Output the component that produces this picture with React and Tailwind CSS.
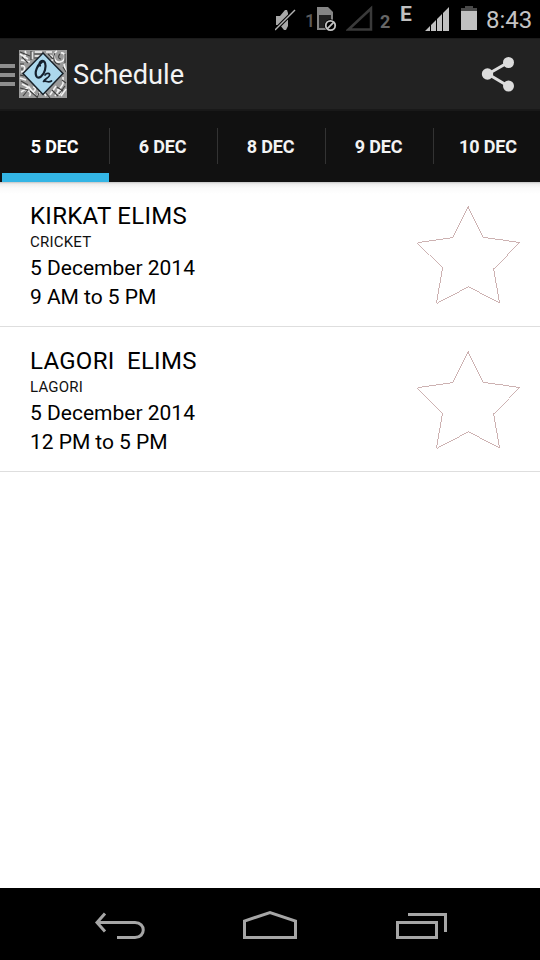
const TABS = ["5 DEC", "6 DEC", "8 DEC", "9 DEC", "10 DEC"];

const EVENTS = [
  { title: "KIRKAT ELIMS", sport: "CRICKET", date: "5 December 2014", time: "9 AM to 5 PM" },
  { title: "LAGORI  ELIMS", sport: "LAGORI", date: "5 December 2014", time: "12 PM to 5 PM" },
];

function StatusBar() {
  return (
    <div className="flex h-[38px] shrink-0 items-start bg-black pl-[275px]">
      {/* Muted speaker */}
      <svg className="mt-2 h-6 w-6 shrink-0" viewBox="0 0 24 24" fill="none">
        <path d="M1 8h4l5-6h2l1 3v13l-2 4H9l-4-5H1z" fill="#a8a8a8" />
        <path d="M0 22L20 2" stroke="#000" strokeWidth="3.500" />
        <path d="M0 22L20 2" stroke="#b4b4b4" strokeWidth="1.500" />
      </svg>
      <span className="ml-[6px] mt-[11px] w-[12px] text-[18px] font-medium leading-5 text-[#5c5c5c]">1</span>
      {/* SIM card, disabled */}
      <svg className="mt-[6px] h-[26px] w-[20px] shrink-0" viewBox="0 0 20 26" fill="none">
        <path d="M0 1h11l5 5v18H0z" fill="#858585" />
        <path d="M2 9h12v13H2z" fill="#222" />
        <circle cx="13.500" cy="19.500" r="6.200" fill="#000" />
        <circle cx="13.500" cy="19.500" r="4.700" stroke="#c4c4c4" strokeWidth="1.800" />
        <path d="M10.200 22.800L16.800 16.200" stroke="#c4c4c4" strokeWidth="1.800" />
      </svg>
      <svg className="ml-[9px] mt-[4px] h-[28px] w-[29px] shrink-0" viewBox="0 0 29 28" fill="none">
        <path d="M2.500 25.500L25 4.500v21z" stroke="#3a3a3a" strokeWidth="2.500" />
      </svg>
      <span className="ml-[5px] mt-[12px] w-[12px] text-[18px] font-bold leading-5 text-[#666]">2</span>
      <span className="ml-[8px] mt-[3px] w-[13px] text-[21px] font-bold leading-[22px] text-[#c0c0c0]">E</span>
      {/* Signal bars */}
      <svg className="ml-[12px] mt-[7px] h-6 w-6 shrink-0" viewBox="0 0 24 24" fill="#c0c0c0">
        <path d="M0 24L5 19v5zM6 24v-6l5-5v11zM12 24V12l5-5v17zM18 24V6l6-6v24z" />
      </svg>
      {/* Battery */}
      <svg className="ml-[12px] mt-[6px] h-6 w-4 shrink-0" viewBox="0 0 16 24">
        <path d="M4 0h8v2h4v3H0V2h4z" fill="#4a4a4a" />
        <path d="M0 5h16v19H0z" fill="#c0c0c0" />
      </svg>
      <span className="ml-[9px] mt-[5px] text-[24px] leading-[30px] text-[#c4c4c4]">8:43</span>
    </div>
  );
}

function Logo() {
  return (
    <svg className="h-12 w-12 shrink-0" viewBox="0 0 48 48" fill="none">
      <rect width="48" height="48" fill="#9a9a9a" />
      {/* Doodle background */}
      <g stroke="#f2f2f2" strokeWidth="1.600">
        <path d="M1 4l8 5M2 10l9 2M13 2v7M16 2h7M16 6h5M27 2h6M38 1c-5 3-3 12 3 11s6-10 1-9M45 14l2 8M2 16c5-2 5 6 0 6M1 28l6 2M3 34l8 4M2 42l8-5 6 8M18 46l5-6 4 6M31 45l6-9M36 46l8-12M42 46l5-7M44 27v7" />
        <path d="M6 1c3 4-3 6-1 10M30 6c3-2 6 3 2 5M7 42c3-3 6 2 3 4M14 37c4 0 2 6-1 4M38 40c4-2 5 3 2 5" />
      </g>
      <g stroke="#3f3f3f" strokeWidth="1.100">
        <path d="M1 2l10 4M3 7l6 6M12 1v9M15 4h10M15 8h4M29 4l5 5M36 3c-3 6 0 12 5 11M41 4c-2 2-2 5 1 5M46 4v9M44 17l3 5M1 14h4M2 19h2M1 25l4 1M2 31l7 4M1 38l8 2M4 46l5-6M11 41l7 6M20 43l-2 5M27 43l4 5M33 40l6 6M38 37l6 4M40 44l6-8M43 30l4 3" />
      </g>
      <path d="M24 3L44 23.500L24 44.500L4 23.500z" fill="#acd8ed" stroke="#182129" strokeWidth="1.500" />
      <g stroke="#14202e" strokeLinecap="round" strokeLinejoin="round">
        <path d="M23 12c-4 2-8 10-5.500 14.500 2 3 7-.500 8.500-6.500 1.500-5 0-10-3.500-9-2 1-2.500 3-1.500 4.500" strokeWidth="2.200" />
        <path d="M26 25c1.500-2.500 5.500-2 4.500 .500-1 2.500-5 3.500-6 6 3-1.500 4 2 8-.500" strokeWidth="1.700" />
      </g>
    </svg>
  );
}

function ActionBar() {
  return (
    <header className="flex h-[73px] shrink-0 items-center border-b-2 border-t border-b-[#191919] border-t-[#1b1b1b] bg-[#222] pt-px">
      <div className="flex w-[15px] flex-col gap-[5px] pt-px">
        <span className="h-1 bg-[#8e8e8e]" />
        <span className="h-1 bg-[#8e8e8e]" />
        <span className="h-1 bg-[#8e8e8e]" />
      </div>
      <div className="-mt-px ml-1">
        <Logo />
      </div>
      <h1 className="ml-1.5 text-[27.2px] leading-8 text-[#f3f3f3]">Schedule</h1>
      <svg className="-mt-px ml-auto mr-[23px] h-9 w-9" viewBox="0 0 36 36" fill="#dcdcdc">
        <path d="M27 6.500L7 18L27 30" fill="none" stroke="#dcdcdc" strokeWidth="3" />
        <circle cx="27.500" cy="6.500" r="5.500" />
        <circle cx="6.500" cy="18" r="5.700" />
        <circle cx="27.500" cy="30" r="5.500" />
      </svg>
    </header>
  );
}

function TabBar() {
  return (
    <nav className="flex h-[71px] shrink-0 overflow-hidden bg-[#111] pl-[2px]">
      {TABS.map((tab, idx) => (
        <div
          key={tab}
          className={`flex w-[108px] shrink-0 flex-col ${idx === 0 ? "text-white" : "text-[#f3f3f3]"}`}
        >
          <div className={`mt-[17px] flex h-9 items-center justify-center text-[18px] font-bold tracking-[-0.15px] ${idx < TABS.length - 1 ? "border-r border-[#333] pr-[2px]" : ""}`}>
            {tab}
          </div>
          {idx === 0 && <div className="mr-px mt-[9px] h-[9px] bg-[#33b5e5]" />}
        </div>
      ))}
    </nav>
  );
}

function EventRow({ event }) {
  return (
    <li className="flex h-[145px] justify-between border-b border-[#dedede] pl-[30px]">
      <div className="pt-[18px] text-black">
        <h2 className="whitespace-pre text-[24px] leading-8 tracking-[0.28px]">{event.title}</h2>
        <p className="text-[15px] leading-5 tracking-[0.2px] text-[#111]">{event.sport}</p>
        <p className="mt-[2px] text-[21px] leading-[29px]">{event.date}</p>
        <p className="text-[21px] leading-[29px] tracking-[-0.04px]">{event.time}</p>
      </div>
      <svg className="mr-[19px] mt-[21px] h-[104px] w-[105px]" viewBox="0 0 105 104" fill="none">
        <path
          d="M52 2.500L67.500 34.500L103.500 39.500L77.500 65L83.500 100L52 83.500L20.500 100L26.500 65L1.500 39.500L36.500 34.500z"
          stroke="#c8aaaa"
          strokeWidth="0.900"
          shapeRendering="crispEdges"
        />
      </svg>
    </li>
  );
}

function NavBar() {
  return (
    <footer className="flex h-[72px] shrink-0 items-center bg-black pl-[94px] pt-1">
      <svg className="h-8 w-[52px]" viewBox="0 0 52 32" fill="none" stroke="#a6a6a6" strokeWidth="3">
        <path d="M11 3.500L3 12.500l8 9M3 12.500h38c11 0 11 15 0 15H23" />
      </svg>
      <svg className="ml-[96px] h-8 w-14" viewBox="0 0 56 32" fill="none" stroke="#a6a6a6" strokeWidth="3">
        <path d="M2.500 27.500V11L28 2.500L53.500 11v16.500z" />
      </svg>
      <svg className="ml-[97px] h-8 w-[54px]" viewBox="0 0 54 32" fill="none" stroke="#a6a6a6" strokeWidth="3">
        <path d="M2.500 12.500h39v15h-39zM13 4.500h37.500V22" />
      </svg>
    </footer>
  );
}

export default function App() {
  return (
    <div className="flex h-[960px] w-[540px] flex-col overflow-hidden bg-white font-[Roboto,sans-serif]">
      <StatusBar />
      <ActionBar />
      <TabBar />
      <main className="flex-1 bg-[linear-gradient(#c4c4c4,#ededed_2px,#fafafa_6px,#fff_12px)]">
        <ul>
          {EVENTS.map((event) => (
            <EventRow key={event.title} event={event} />
          ))}
        </ul>
      </main>
      <NavBar />
    </div>
  );
}
